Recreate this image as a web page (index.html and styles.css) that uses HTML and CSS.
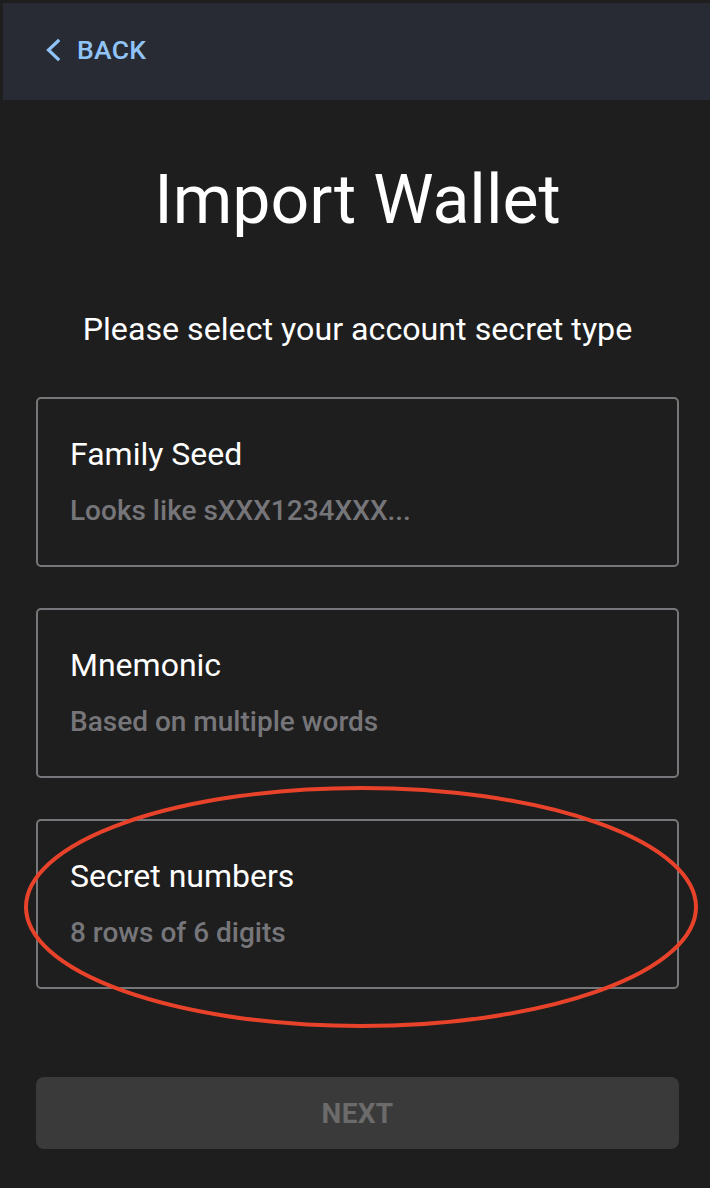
FILE: index.html
```html
<!DOCTYPE html>
<html>
<head>
<meta charset="utf-8">
<link rel="stylesheet" href="styles.css">
</head>
<body>
<div class="frame">
  <header class="topbar">
    <a class="back">
      <svg class="chev" width="17" height="24" viewBox="0 0 17 24"><path d="M14 3 L4.5 12 L14 21" fill="none" stroke="#90c4f9" stroke-width="3.2" stroke-linecap="square"/></svg>
      <span>BACK</span>
    </a>
  </header>
  <main class="content">
    <h1 class="title">Import Wallet</h1>
    <p class="subtitle">Please select your account secret type</p>
    <div class="options">
      <div class="card">
        <div class="card-title">Family Seed</div>
        <div class="card-sub">Looks like sXXX1234XXX...</div>
      </div>
      <div class="card">
        <div class="card-title">Mnemonic</div>
        <div class="card-sub">Based on multiple words</div>
      </div>
      <div class="card">
        <div class="card-title">Secret numbers</div>
        <div class="card-sub">8 rows of 6 digits</div>
      </div>
    </div>
    <button class="next">NEXT</button>
  </main>
  <svg class="mark" width="710" height="1188" viewBox="0 0 710 1188"><ellipse cx="361" cy="907" rx="335" ry="119" fill="none" stroke="#e8432a" stroke-width="4"/></svg>
</div>
</body>
</html>
```
FILE: styles.css
```css
html, body {
  margin: 0;
  padding: 0;
  background: #1e1e1e;
}
.frame {
  position: relative;
  width: 710px;
  height: 1188px;
  box-sizing: border-box;
  padding-top: 3px;
  padding-left: 3px;
  background: #1e1e1e;
  font-family: Roboto, "Liberation Sans", sans-serif;
  overflow: hidden;
}
.topbar {
  height: 97px;
  box-sizing: border-box;
  padding-bottom: 4px;
  background: #282b33;
  display: flex;
  align-items: center;
  padding-left: 41px;
}
.back {
  display: flex;
  align-items: center;
  gap: 16px;
  color: #90c4f9;
  font-size: 26.5px;
  font-weight: 500;
  letter-spacing: 0.3px;
}
.chev {
  display: block;
}
.content {
  padding: 0 31px 0 33px;
  display: flex;
  flex-direction: column;
  align-items: stretch;
}
.title {
  margin: 58px 0 0;
  text-align: center;
  color: #ffffff;
  font-size: 68px;
  font-weight: 400;
  line-height: 84px;
}
.subtitle {
  margin: 67px 0 0;
  text-align: center;
  color: #ffffff;
  font-size: 32.2px;
  line-height: 40px;
}
.options {
  margin-top: 48px;
  display: flex;
  flex-direction: column;
  gap: 41px;
}
.card {
  height: 170px;
  box-sizing: border-box;
  border: 2px solid #77777b;
  border-radius: 5px;
  padding: 35px 32px 0;
}
.card-title {
  color: #ffffff;
  font-size: 32px;
  line-height: 40px;
}
.card-sub {
  margin-top: 19px;
  color: #76767a;
  font-size: 28px;
  font-weight: 500;
  line-height: 36px;
}
.next {
  margin-top: 88px;
  height: 72px;
  border: 0;
  border-radius: 8px;
  background: #3a3a3a;
  color: #6b6b6b;
  font-family: Roboto, "Liberation Sans", sans-serif;
  font-size: 28px;
  font-weight: 700;
  letter-spacing: 0.3px;
}
.mark {
  position: absolute;
  left: 0;
  top: 0;
  pointer-events: none;
}
```
